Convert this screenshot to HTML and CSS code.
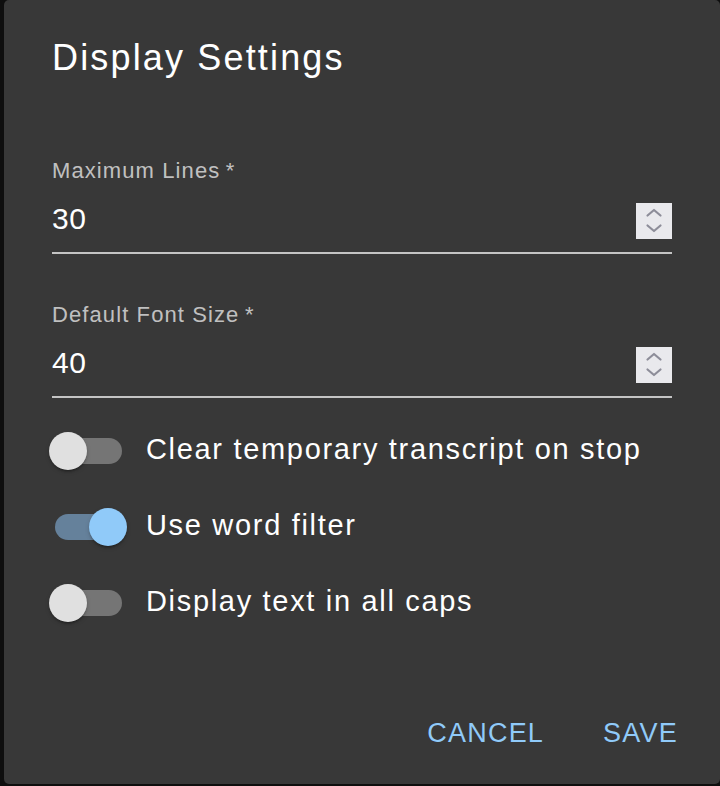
FILE: index.html
```html
<!DOCTYPE html>
<html lang="en">
<head>
<meta charset="utf-8">
<title>Display Settings</title>
<link rel="stylesheet" href="styles.css">
</head>
<body>
<div class="dialog" role="dialog" aria-labelledby="dlg-title">
  <h2 class="dialog-title" id="dlg-title">Display Settings</h2>

  <div class="field field-first">
    <label class="field-label">Maximum Lines&thinsp;*</label>
    <div class="input-row">
      <span class="input-value">30</span>
      <span class="spinner" aria-hidden="true">
        <svg width="36" height="36" viewBox="0 0 36 36">
          <polyline points="11.5,12.5 18,7 24.5,12.5" fill="none" stroke="#8d8d99" stroke-width="2.2" stroke-linecap="round" stroke-linejoin="round"/>
          <polyline points="11.5,22.5 18,28 24.5,22.5" fill="none" stroke="#8d8d99" stroke-width="2.2" stroke-linecap="round" stroke-linejoin="round"/>
        </svg>
      </span>
    </div>
  </div>

  <div class="field">
    <label class="field-label">Default Font Size&thinsp;*</label>
    <div class="input-row">
      <span class="input-value">40</span>
      <span class="spinner" aria-hidden="true">
        <svg width="36" height="36" viewBox="0 0 36 36">
          <polyline points="11.5,12.5 18,7 24.5,12.5" fill="none" stroke="#8d8d99" stroke-width="2.2" stroke-linecap="round" stroke-linejoin="round"/>
          <polyline points="11.5,22.5 18,28 24.5,22.5" fill="none" stroke="#8d8d99" stroke-width="2.2" stroke-linecap="round" stroke-linejoin="round"/>
        </svg>
      </span>
    </div>
  </div>

  <div class="switches">
    <div class="switch-row">
      <span class="switch"><span class="track"></span><span class="thumb"></span></span>
      <span class="switch-label">Clear temporary transcript on stop</span>
    </div>
    <div class="switch-row">
      <span class="switch on"><span class="track"></span><span class="thumb"></span></span>
      <span class="switch-label">Use word filter</span>
    </div>
    <div class="switch-row">
      <span class="switch"><span class="track"></span><span class="thumb"></span></span>
      <span class="switch-label">Display text in all caps</span>
    </div>
  </div>

  <div class="actions">
    <button class="btn" type="button">Cancel</button>
    <button class="btn" type="button">Save</button>
  </div>
</div>
</body>
</html>
```

FILE: styles.css
```css
html, body {
  margin: 0;
  padding: 0;
}

body {
  background: #0e0e0e;
  font-family: "Liberation Sans", Arial, Helvetica, sans-serif;
  color: #fff;
}

.dialog {
  margin-left: 4px;
  width: 716px;
  height: 784px;
  box-sizing: border-box;
  background: #383838;
  border-radius: 5px;
  padding: 0 48px;
  display: flex;
  flex-direction: column;
}

.dialog-title {
  margin: 0;
  padding-top: 36px;
  font-size: 36px;
  line-height: 44px;
  font-weight: normal;
  letter-spacing: 0.06em;
  color: #fff;
}

.field {
  margin-top: 48px;
  display: flex;
  flex-direction: column;
}

.field-first {
  margin-top: 78px;
}

.field-label {
  font-size: 22px;
  line-height: 26px;
  letter-spacing: 0.05em;
  color: rgba(255, 255, 255, 0.7);
}

.input-row {
  margin-top: 17px;
  height: 51px;
  display: flex;
  align-items: flex-start;
  justify-content: space-between;
  border-bottom: 2px solid #c4c4c4;
}

.input-value {
  font-size: 30px;
  line-height: 36px;
  letter-spacing: 0.02em;
  color: #fff;
}

.spinner {
  margin-top: 2px;
  width: 36px;
  height: 36px;
  background: #e9e9ed;
  display: block;
}

.spinner svg {
  display: block;
}

.switches {
  margin-top: 15px;
  display: flex;
  flex-direction: column;
}

.switch-row {
  height: 76px;
  display: flex;
  align-items: center;
}

.switch {
  position: relative;
  display: block;
  width: 80px;
  height: 40px;
  margin-left: -4px;
  flex: none;
}

.track {
  position: absolute;
  left: 7px;
  top: 7px;
  width: 67px;
  height: 26px;
  border-radius: 13px;
  background: #757575;
}

.thumb {
  position: absolute;
  left: 1px;
  top: 1px;
  width: 38px;
  height: 38px;
  border-radius: 50%;
  background: #e0e0e0;
  box-shadow: 0 3px 2px -2px rgba(0, 0, 0, 0.2), 0 2px 2px 0 rgba(0, 0, 0, 0.14), 0 2px 5px 0 rgba(0, 0, 0, 0.12);
}

.switch.on .track {
  background: #65819b;
}

.switch.on .thumb {
  left: 41px;
  background: #90caf9;
}

.switch-label {
  margin-left: 18px;
  margin-bottom: 5px;
  font-size: 29px;
  line-height: 36px;
  letter-spacing: 0.058em;
  color: #fff;
}

.actions {
  margin-top: auto;
  margin-right: -6px;
  padding-bottom: 33px;
  display: flex;
  justify-content: flex-end;
  gap: 59px;
}

.btn {
  background: none;
  border: none;
  padding: 0;
  margin: 0;
  font-family: inherit;
  font-size: 27px;
  line-height: 36px;
  letter-spacing: 0.045em;
  text-transform: uppercase;
  color: #90caf9;
  cursor: pointer;
}
```
